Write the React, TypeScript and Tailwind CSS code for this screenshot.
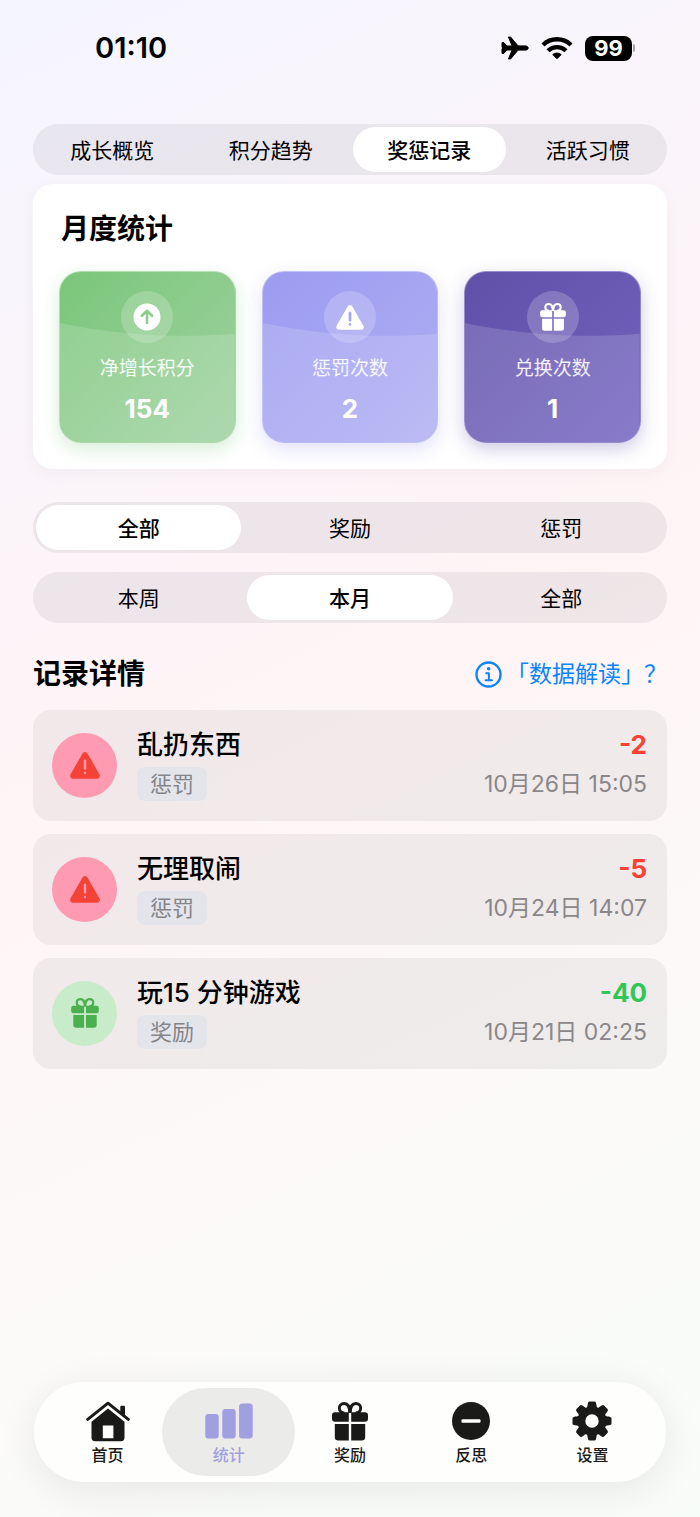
import { useState } from "react";
import type { ReactNode } from "react";
import { clsx } from "clsx";

function AirplaneIcon() {
  return (
    <svg viewBox="0 0 28 24" className="h-6 w-7" aria-hidden="true">
      <path
        d="M1 6.6H2.8L5.8 10H11.2L7.4 1H9.6L17 9.9H24.6C26.2 9.9 27.2 10.9 27.2 12S26.2 14.1 24.6 14.1H17L9.6 23H7.4L11.2 14H5.8L2.8 17.4H1V12.9L1.8 12 1 11.1Z"
        fill="currentColor"
        stroke="currentColor"
        strokeWidth="1"
        strokeLinejoin="round"
      />
    </svg>
  );
}

function WifiIcon() {
  return (
    <svg viewBox="0 0 32 24" className="h-6 w-8" aria-hidden="true">
      <g fill="none" stroke="currentColor" strokeWidth="4.4">
        <path d="M2 9A20 20 0 0 1 30 9" />
        <path d="M7 14.8A12.8 12.8 0 0 1 25 14.8" />
      </g>
      <path
        d="M16 22.8 11.8 18.6A6.4 6.4 0 0 1 20.2 18.6Z"
        fill="currentColor"
        stroke="currentColor"
        strokeWidth="1"
        strokeLinejoin="round"
      />
    </svg>
  );
}

function GiftIcon({ className }: { className?: string }) {
  return (
    <svg viewBox="0 0 36 39" className={className} aria-hidden="true">
      <g fill="currentColor">
        <path d="M3 10.2H16.8V19.8H3A3 3 0 0 1 0 16.8V13.2A3 3 0 0 1 3 10.2Z" />
        <path d="M33 10.2H19.2V19.8H33A3 3 0 0 0 36 16.8V13.2A3 3 0 0 0 33 10.2Z" />
        <path d="M2.8 22H16.8V38.6H6.3A3.5 3.5 0 0 1 2.8 35.1Z" />
        <path d="M33.2 22H19.2V38.6H29.7A3.5 3.5 0 0 0 33.2 35.1Z" />
      </g>
      <g fill="none" stroke="currentColor" strokeWidth="2.9">
        <path d="M17.8 11C17.8 5 15.6 1.5 12.2 1.5C9.3 1.5 7.3 3.5 7.3 6C7.3 9 9.6 10.9 12.4 11" />
        <path d="M18.2 11C18.2 5 20.4 1.5 23.8 1.5C26.7 1.5 28.7 3.5 28.7 6C28.7 9 26.4 10.9 23.6 11" />
      </g>
    </svg>
  );
}

function WarningIcon({
  className,
  markWidth,
  markColor,
}: {
  className?: string;
  markWidth: number;
  markColor: string;
}) {
  return (
    <svg viewBox="0 0 30 27" className={className} aria-hidden="true">
      <path
        d="M15 3.2 26.8 23.8H3.2Z"
        fill="currentColor"
        stroke="currentColor"
        strokeWidth="6"
        strokeLinejoin="round"
      />
      <g stroke={markColor} strokeWidth={markWidth} strokeLinecap="round">
        <path d="M15 8.8V16.6" />
        <path d="M15 20.9V21" />
      </g>
    </svg>
  );
}

function ArrowUpIcon() {
  return (
    <svg viewBox="0 0 28 28" className="size-7" aria-hidden="true">
      <circle cx="14" cy="14" r="13.5" fill="#fff" />
      <path
        d="M14 20V8.5M8.9 12.8 14 7.8 19.1 12.8"
        fill="none"
        stroke="#8ccc8c"
        strokeWidth="2.6"
        strokeLinecap="round"
        strokeLinejoin="round"
      />
    </svg>
  );
}

function InfoIcon() {
  return (
    <svg viewBox="0 0 27 27" className="size-[27px]" aria-hidden="true">
      <circle
        cx="13.5"
        cy="13.5"
        r="12"
        fill="none"
        stroke="currentColor"
        strokeWidth="2.4"
      />
      <circle cx="13.6" cy="7.7" r="1.8" fill="currentColor" />
      <path
        d="M11.2 12.2H13.9V19.2M10.6 19.3H17"
        fill="none"
        stroke="currentColor"
        strokeWidth="2"
        strokeLinecap="round"
        strokeLinejoin="round"
      />
    </svg>
  );
}

function HomeIcon() {
  return (
    <svg viewBox="0 0 44 41" className="h-[41px] w-11" aria-hidden="true">
      <path
        d="M1.7 18.4 22 2.2 42.3 18.4"
        fill="none"
        stroke="currentColor"
        strokeWidth="3"
        strokeLinecap="round"
        strokeLinejoin="round"
      />
      <path
        d="M34.3 12V6A1.2 1.2 0 0 1 35.5 4.8H37.8A1.2 1.2 0 0 1 39 6V15.8Z"
        fill="currentColor"
      />
      <path
        d="M5.5 20.8 22 7.6 38.5 20.8V36.6A3.6 3.6 0 0 1 34.9 40.2H9.1A3.6 3.6 0 0 1 5.5 36.6ZM16.8 24.5V37.2H27.4V24.5Z"
        fill="currentColor"
        fillRule="evenodd"
      />
    </svg>
  );
}

function BarsIcon() {
  return (
    <svg
      viewBox="0 0 48 36"
      className="h-9 w-12"
      fill="currentColor"
      aria-hidden="true"
    >
      <rect x="0.3" y="11" width="13.4" height="24.4" rx="3" />
      <rect x="17.3" y="6" width="13.4" height="29.4" rx="3" />
      <rect x="34.1" y="0.4" width="13.6" height="35" rx="3" />
    </svg>
  );
}

function MinusIcon() {
  return (
    <svg viewBox="0 0 38 38" className="size-[38px]" aria-hidden="true">
      <circle cx="19" cy="19" r="19" fill="currentColor" />
      <rect x="9.5" y="17.3" width="19" height="3.4" rx="1" fill="#fff" />
    </svg>
  );
}

const teeth = [0, 45, 90, 135, 180, 225, 270, 315];

function GearIcon() {
  return (
    <svg viewBox="-20 -20 40 40" className="size-10" aria-hidden="true">
      <circle r="10.6" fill="none" stroke="currentColor" strokeWidth="7.8" />
      {teeth.map((angle) => (
        <path
          key={angle}
          d="M-5.4-12.6C-4.4-14.4-4.5-16.4-4-18.2Q-3.6-19.5-2.4-19.5H2.4Q3.6-19.5 4-18.2C4.5-16.4 4.4-14.4 5.4-12.6Z"
          transform={`rotate(${angle})`}
          fill="currentColor"
        />
      ))}
    </svg>
  );
}

function StatusBar() {
  return (
    <header className="flex h-24 items-center justify-between pl-[95px] pr-[65px]">
      <time className="text-[29px] font-semibold">01:10</time>
      <div className="flex items-center gap-3">
        <AirplaneIcon />
        <WifiIcon />
        <div className="flex items-center gap-px">
          <span className="flex h-[25px] w-[47px] items-center justify-center rounded-lg bg-black text-[22px] font-bold text-white">
            99
          </span>
          <span className="h-2 w-0.5 rounded-r-full bg-black/35" />
        </div>
      </div>
    </header>
  );
}

function Segmented({
  label,
  options,
  initial,
  className,
}: {
  label: string;
  options: string[];
  initial: string;
  className?: string;
}) {
  const [value, setValue] = useState(initial);

  return (
    <div
      role="group"
      aria-label={label}
      className={clsx(
        "grid h-[51px] auto-cols-fr grid-flow-col rounded-full bg-[#787880]/12 py-[3px]",
        className
      )}
    >
      {options.map((option) => (
        <button
          key={option}
          type="button"
          aria-pressed={option === value}
          onClick={() => setValue(option)}
          className={clsx(
            "mx-[3px] rounded-full pt-0.5 text-[21px]",
            option === value ? "bg-white font-medium" : "font-normal"
          )}
        >
          {option}
        </button>
      ))}
    </div>
  );
}

function StatTile({
  icon,
  label,
  value,
  className,
}: {
  icon: ReactNode;
  label: string;
  value: number;
  className: string;
}) {
  return (
    <div
      className={clsx(
        "relative flex flex-col items-center overflow-hidden rounded-[22px] border border-white/30 bg-linear-to-br pb-[17px] pt-[19px] text-white",
        className
      )}
    >
      <svg
        viewBox="0 0 177 172"
        preserveAspectRatio="none"
        className="absolute inset-0 h-full w-full"
        aria-hidden="true"
      >
        <path
          d="M0 51.5C50 62 110 68 177 62.5V172H0Z"
          fill="#fff"
          fillOpacity="0.15"
        />
      </svg>
      <div className="relative flex size-[52px] items-center justify-center rounded-full bg-white/20">
        {icon}
      </div>
      <p className="relative mt-3.5 text-[19px] leading-6 text-white/90">
        {label}
      </p>
      <p className="relative mt-3 text-[26px] font-bold leading-8">{value}</p>
    </div>
  );
}

type LogEntry = {
  title: string;
  kind: "惩罚" | "奖励";
  points: number;
  date: string;
};

const entries: LogEntry[] = [
  { title: "乱扔东西", kind: "惩罚", points: -2, date: "10月26日 15:05" },
  { title: "无理取闹", kind: "惩罚", points: -5, date: "10月24日 14:07" },
  { title: "玩15 分钟游戏", kind: "奖励", points: -40, date: "10月21日 02:25" },
];

function LogRow({ entry }: { entry: LogEntry }) {
  const isPenalty = entry.kind === "惩罚";

  return (
    <li className="flex items-center gap-5 rounded-[18px] bg-[#808080]/10 pb-5 pl-[19px] pr-5 pt-[19px]">
      <div
        className={clsx(
          "flex size-[65px] shrink-0 items-center justify-center rounded-full",
          isPenalty ? "bg-[#ff9ab3] text-[#f44336]" : "bg-[#c8ecca] text-[#4caf50]"
        )}
      >
        {isPenalty ? (
          <WarningIcon
            className="h-[27px] w-[30px]"
            markWidth={2.4}
            markColor="#ff9ab3"
          />
        ) : (
          <GiftIcon className="h-[30px] w-7" />
        )}
      </div>
      <div className="flex-1">
        <h3 className="text-[26px] font-medium leading-8">{entry.title}</h3>
        <span className="mt-1.5 inline-flex h-[34px] items-center rounded-lg bg-[#e4e5eb] px-[13px] align-top text-[22px] text-[#858589]">
          {entry.kind}
        </span>
      </div>
      <div className="text-right">
        <p
          className={clsx(
            "text-[26px] font-bold leading-8",
            isPenalty ? "text-[#fb4034]" : "text-[#30c756]"
          )}
        >
          {entry.points}
        </p>
        <p className="mt-1.5 text-[23px] leading-[34px] text-[#8a878b]">
          {entry.date}
        </p>
      </div>
    </li>
  );
}

const tabs: { label: string; icon: ReactNode }[] = [
  { label: "首页", icon: <HomeIcon /> },
  { label: "统计", icon: <BarsIcon /> },
  { label: "奖励", icon: <GiftIcon className="h-[39px] w-9" /> },
  { label: "反思", icon: <MinusIcon /> },
  { label: "设置", icon: <GearIcon /> },
];

function TabBar() {
  const [active, setActive] = useState("统计");

  return (
    <nav className="mx-[34px] mb-[35px] mt-auto grid grid-cols-5 rounded-full bg-[#fefefc] px-[13px] py-1.5 shadow-[0_8px_40px_rgba(0,0,0,0.08)]">
      {tabs.map((tab) => (
        <button
          key={tab.label}
          type="button"
          aria-current={tab.label === active ? "page" : undefined}
          onClick={() => setActive(tab.label)}
          className={clsx(
            "-mx-1.5 flex flex-col items-center rounded-full pb-[11px] pt-[13px]",
            tab.label === active ? "bg-[#ebebe9] text-[#a09fe0]" : "text-[#1a1a18]"
          )}
        >
          <span className="flex h-10 items-center">{tab.icon}</span>
          <span className="mt-1 text-base font-medium leading-5">
            {tab.label}
          </span>
        </button>
      ))}
    </nav>
  );
}

export default function App() {
  return (
    <div className="flex min-h-screen flex-col bg-[linear-gradient(155deg,#f5f5ff,#fff4f6_45%,#fbfaf8_75%,#f8fcf9)] font-[Inter,'Noto_Sans_CJK_SC',sans-serif] text-black">
      <StatusBar />

      <main className="px-[33px] pb-8">
        <Segmented
          label="统计类型"
          options={["成长概览", "积分趋势", "奖惩记录", "活跃习惯"]}
          initial="奖惩记录"
          className="mt-7"
        />

        <section className="mt-[9px] rounded-[20px] bg-white p-[26px] shadow-[0_4px_16px_rgba(0,0,0,0.04)]">
          <h2 className="px-0.5 pt-px text-[28px] font-bold leading-9">
            月度统计
          </h2>
          <div className="mt-6 grid grid-cols-3 gap-[26px]">
            <StatTile
              icon={<ArrowUpIcon />}
              label="净增长积分"
              value={154}
              className="from-[#7ac67a] to-[#a0d2a1] shadow-[0_6px_18px_rgba(124,200,124,0.3)]"
            />
            <StatTile
              icon={
                <WarningIcon
                  className="h-[25px] w-7"
                  markWidth={3}
                  markColor="#a9a9f3"
                />
              }
              label="惩罚次数"
              value={2}
              className="from-[#9c9bf1] to-[#afaff2] shadow-[0_6px_18px_rgba(156,155,241,0.3)]"
            />
            <StatTile
              icon={<GiftIcon className="h-[28px] w-[26px]" />}
              label="兑换次数"
              value={1}
              className="from-[#6050a8] to-[#7464c0] shadow-[0_6px_18px_rgba(96,80,168,0.3)]"
            />
          </div>
        </section>

        <Segmented
          label="记录类型"
          options={["全部", "奖励", "惩罚"]}
          initial="全部"
          className="mt-[33px]"
        />
        <Segmented
          label="时间范围"
          options={["本周", "本月", "全部"]}
          initial="本月"
          className="mt-[19px]"
        />

        <div className="mt-[31px] flex h-10 items-center justify-between">
          <h2 className="text-[28px] font-bold">记录详情</h2>
          <button
            type="button"
            className="flex items-center gap-1 text-[23px] text-[#0a84ff]"
          >
            <InfoIcon />
            「数据解读」？
          </button>
        </div>

        <ul className="mt-4 flex flex-col gap-[13px]">
          {entries.map((entry) => (
            <LogRow key={entry.title} entry={entry} />
          ))}
        </ul>
      </main>

      <TabBar />
    </div>
  );
}
